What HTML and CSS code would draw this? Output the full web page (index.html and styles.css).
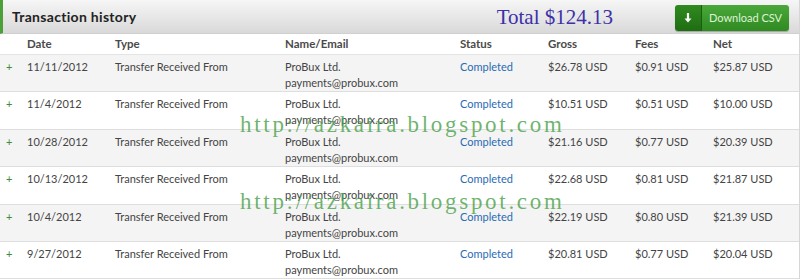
FILE: index.html
```html
<!DOCTYPE html>
<html>
<head>
<meta charset="utf-8">
<link rel="stylesheet" href="styles.css">
</head>
<body>
<div class="page">
  <div class="topbar">
    <h1 class="title">Transaction history</h1>
    <div class="total">Total $124.13</div>
    <a class="dl-btn">
      <span class="dl-icon"><svg width="10" height="12" viewBox="0 0 10 12"><path d="M5 1v8" stroke="#fff" stroke-width="2.2"/><path d="M1.5 6.5L5 10.5L8.5 6.5z" fill="#fff"/></svg></span>
      <span class="dl-text">Download CSV</span>
    </a>
  </div>
  <div class="table">
    <div class="row head">
      <span></span><span>Date</span><span>Type</span><span>Name/Email</span><span>Status</span><span>Gross</span><span>Fees</span><span>Net</span>
    </div>
    <div class="row odd">
      <span class="plus">+</span><span>11/11/2012</span><span>Transfer Received From</span><span>ProBux Ltd.<br>payments@probux.com</span><span class="st">Completed</span><span>$26.78 USD</span><span>$0.91 USD</span><span>$25.87 USD</span>
    </div>
    <div class="row">
      <span class="plus">+</span><span>11/4/2012</span><span>Transfer Received From</span><span>ProBux Ltd.<br>payments@probux.com</span><span class="st">Completed</span><span>$10.51 USD</span><span>$0.51 USD</span><span>$10.00 USD</span>
    </div>
    <div class="row odd">
      <span class="plus">+</span><span>10/28/2012</span><span>Transfer Received From</span><span>ProBux Ltd.<br>payments@probux.com</span><span class="st">Completed</span><span>$21.16 USD</span><span>$0.77 USD</span><span>$20.39 USD</span>
    </div>
    <div class="row">
      <span class="plus">+</span><span>10/13/2012</span><span>Transfer Received From</span><span>ProBux Ltd.<br>payments@probux.com</span><span class="st">Completed</span><span>$22.68 USD</span><span>$0.81 USD</span><span>$21.87 USD</span>
    </div>
    <div class="row odd">
      <span class="plus">+</span><span>10/4/2012</span><span>Transfer Received From</span><span>ProBux Ltd.<br>payments@probux.com</span><span class="st">Completed</span><span>$22.19 USD</span><span>$0.80 USD</span><span>$21.39 USD</span>
    </div>
    <div class="row">
      <span class="plus">+</span><span>9/27/2012</span><span>Transfer Received From</span><span>ProBux Ltd.<br>payments@probux.com</span><span class="st">Completed</span><span>$20.81 USD</span><span>$0.77 USD</span><span>$20.04 USD</span>
    </div>
  </div>
  <div class="wm wm1">http://azkaira.blogspot.com</div>
  <div class="wm wm2">http://azkaira.blogspot.com</div>
</div>
</body>
</html>
```

FILE: styles.css
```css
html, body {
  margin: 0;
  padding: 0;
  background: #fff;
}
.page {
  position: relative;
  width: 800px;
  height: 279px;
  overflow: hidden;
  font-family: Lato, "Open Sans", sans-serif;
  color: #444;
  border-right: 1px solid #d6d6d6;
  box-sizing: border-box;
}
.topbar {
  height: 34px;
  box-sizing: border-box;
  display: flex;
  align-items: center;
  border-left: 3px solid #4ba03a;
  border-bottom: 1px solid #d0d0d0;
  background: linear-gradient(#f6f6f6, #d9d9d9);
  padding: 0 10px 0 9px;
}
.title {
  margin: 0;
  font-size: 14px;
  font-weight: bold;
  color: #222;
  letter-spacing: 0.3px;
}
.total {
  margin-left: auto;
  margin-right: 62px;
  font-family: "Liberation Serif", "DejaVu Serif", serif;
  font-size: 21px;
  color: #3d30a8;
  padding-top: 2px;
}
.dl-btn {
  display: flex;
  height: 26px;
  width: 114px;
  border-radius: 3px;
  overflow: hidden;
  box-shadow: 0 1px 1px rgba(0,0,0,0.25);
  margin-top: 2px;
}
.dl-icon {
  width: 26px;
  display: flex;
  align-items: center;
  justify-content: center;
  background: linear-gradient(#2f8a1f, #1f6d12);
  border-right: 1px solid #1a5c10;
}
.dl-text {
  flex: 1;
  display: flex;
  align-items: center;
  justify-content: center;
  font-size: 11px;
  color: #dff3d6;
  background: linear-gradient(#4aa83a, #2f8a22);
}
.table {
  font-size: 11px;
}
.row {
  display: grid;
  grid-template-columns: 27px 88px 170px 175px 88px 87px 78px 1fr;
  box-sizing: border-box;
  height: 37.4px;
  padding-top: 4px;
  line-height: 16px;
  border-bottom: 1px solid #dedede;
}
.row.head {
  height: 21px;
  padding-top: 2px;
  font-weight: bold;
  color: #4a4a4a;
  font-size: 11.5px;
  border-bottom: 1px solid #e4e4e4;
}
.row.odd {
  background: #f4f4f4;
}
.plus {
  color: #3e8c3a;
  padding-left: 6px;
}
.st {
  color: #2a6bb3;
}
.wm {
  position: absolute;
  font-family: "Liberation Serif", "DejaVu Serif", serif;
  font-size: 23px;
  letter-spacing: 2.7px;
  color: rgba(70, 160, 70, 0.78);
  left: 240px;
  line-height: 20px;
  pointer-events: none;
}
.wm1 { top: 115px; }
.wm2 { top: 192px; }
```
